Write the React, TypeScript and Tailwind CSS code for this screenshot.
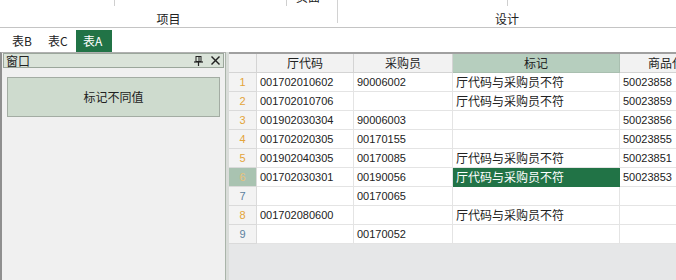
import React from 'react';

type Row = { n: string; a: string; b: string; c: string; d: string; sel?: boolean; blue?: boolean };

const rows: Row[] = [
  { n: '1', a: '001702010602', b: '90006002', c: '厅代码与采购员不符', d: '50023858' },
  { n: '2', a: '001702010706', b: '', c: '厅代码与采购员不符', d: '50023859' },
  { n: '3', a: '001902030304', b: '90006003', c: '', d: '50023856' },
  { n: '4', a: '001702020305', b: '00170155', c: '', d: '50023855' },
  { n: '5', a: '001902040305', b: '00170085', c: '厅代码与采购员不符', d: '50023851' },
  { n: '6', a: '001702030301', b: '00190056', c: '厅代码与采购员不符', d: '50023853', sel: true },
  { n: '7', a: '', b: '00170065', c: '', d: '', blue: true },
  { n: '8', a: '001702080600', b: '', c: '厅代码与采购员不符', d: '' },
  { n: '9', a: '', b: '00170052', c: '', d: '', blue: true },
];

const cjk = "text-[12px] [font-family:'Noto_Sans_CJK_SC',sans-serif]";
const num = "text-[11px] [font-family:'Liberation_Sans',Arial,sans-serif]";

function PinIcon() {
  return (
    <svg width="9" height="10" viewBox="0 0 9 10" className="block">
      <rect x="2" y="0.5" width="5" height="5" fill="none" stroke="#222" strokeWidth="1" />
      <line x1="5" y1="1" x2="5" y2="5" stroke="#222" strokeWidth="1" />
      <line x1="0" y1="6" x2="9" y2="6" stroke="#222" strokeWidth="1.2" />
      <line x1="4.5" y1="6" x2="4.5" y2="10" stroke="#222" strokeWidth="1.2" />
    </svg>
  );
}

function CloseIcon() {
  return (
    <svg width="9" height="9" viewBox="0 0 9 9" className="block">
      <line x1="0.5" y1="0.5" x2="8.5" y2="8.5" stroke="#222" strokeWidth="1.4" />
      <line x1="8.5" y1="0.5" x2="0.5" y2="8.5" stroke="#222" strokeWidth="1.4" />
    </svg>
  );
}

export default function App() {
  return (
    <div className="w-[676px] h-[280px] overflow-hidden bg-white text-[#222] flex flex-col [font-family:'Liberation_Sans','Noto_Sans_CJK_SC',sans-serif]">
      {/* Ribbon bottom */}
      <div className="h-[28px] shrink-0 border-b border-[#c4c4c4] flex">
        <div className="w-[337px] h-[27px] flex flex-col">
          <div className="h-[6px] flex overflow-hidden">
            <div className="w-[115px] border-r border-[#cfcfcf]" />
            <div className="w-[172px] border-r border-[#cfcfcf]" />
            <div className={`pl-[9px] leading-[12px] mt-[-9px] ${cjk}`}>页面</div>
          </div>
          <div className={`flex-1 flex items-end justify-center pb-[2px] leading-[12px] ${cjk}`}>项目</div>
        </div>
        <div className="w-px h-[23px] bg-[#d2d2d2]" />
        <div className="flex-1 h-[27px] flex flex-col">
          <div className="h-[6px] flex">
            <div className="w-[170px] border-r border-[#cfcfcf]" />
          </div>
          <div className={`flex-1 flex items-end justify-center pb-[2px] leading-[12px] ${cjk}`}>设计</div>
        </div>
      </div>

      {/* Tabs */}
      <div className="h-[24px] shrink-0 flex items-end pl-[5px]">
        <div className={`w-[36px] h-[22px] pl-[7px] flex items-center ${cjk}`}>表B</div>
        <div className={`w-[35px] h-[22px] pl-[7px] flex items-center ${cjk}`}>表C</div>
        <div className={`w-[36px] h-[22px] pl-[7px] flex items-center bg-[#217346] text-white ${cjk}`}>表A</div>
      </div>

      {/* Main */}
      <div className="flex-1 flex min-h-0">
        {/* Left dock panel */}
        <div className="w-[226px] shrink-0 bg-[#f0f0f0] border-l-2 border-[#8f8f8f] border-r border-r-[#a9b4a9] border-t border-t-[#b0b0b0] flex flex-col">
          <div className="mx-[1px] h-[15px] bg-[#dae3d9] border border-[#9ba69b] flex items-center pl-[2px] pr-[3px]">
            <span className={`leading-[12px] ${cjk} flex-1`}>窗口</span>
            <span className="mr-[8px]"><PinIcon /></span>
            <CloseIcon />
          </div>
          <div className="mx-[5px] mt-[9px] h-[40px] bg-[#cedbce] border border-[#a3aca3] flex items-center justify-center">
            <span className={`${cjk} text-[#222]`}>标记不同值</span>
          </div>
        </div>
        {/* splitter */}
        <div className="w-[3px] shrink-0 bg-[#d9dcd9]" />
        {/* Grid */}
        <div className="flex-1 min-w-0 bg-[#e6e7e8] border-t-2 border-[#a0a0a0] overflow-hidden">
          <div className="w-[520px] grid grid-cols-[28px_97px_99px_167px_129px] bg-white">
            <div className="h-[19px] bg-[#f2f2f2] border-r border-b border-[#d4d4d4]" />
            <div className={`h-[19px] bg-[#f2f2f2] border-r border-b border-[#d4d4d4] flex items-center justify-center ${cjk}`}>厅代码</div>
            <div className={`h-[19px] bg-[#f2f2f2] border-r border-b border-[#d4d4d4] flex items-center justify-center ${cjk}`}>采购员</div>
            <div className={`h-[19px] bg-[#b6cebe] border-r border-b border-[#a9bfb0] flex items-center justify-center ${cjk}`}>标记</div>
            <div className={`h-[19px] bg-[#f2f2f2] border-r border-b border-[#d4d4d4] flex items-center pl-[28px] ${cjk}`}>商品代码</div>
            {rows.map((r) => (
              <React.Fragment key={r.n}>
                <div
                  className={`h-[19px] border-r border-b border-[#dadada] flex items-center justify-center ${num} ${
                    r.sel ? 'bg-[#a9c3b1] text-[#e9c27a]' : 'bg-[#f3f3f3]'
                  } ${r.blue ? 'text-[#5b7f9e]' : r.sel ? '' : 'text-[#e3a43a]'}`}
                >
                  {r.n}
                </div>
                <div className={`h-[19px] border-r border-b border-[#e4e4e4] flex items-center pl-[3px] ${num}`}>{r.a}</div>
                <div className={`h-[19px] border-r border-b border-[#e4e4e4] flex items-center pl-[3px] ${num}`}>{r.b}</div>
                <div
                  className={`h-[19px] border-r border-b flex items-center pl-[3px] ${cjk} ${
                    r.sel ? 'bg-[#217346] text-white border-[#217346]' : 'border-[#e4e4e4]'
                  }`}
                >
                  {r.c}
                </div>
                <div className={`h-[19px] border-r border-b border-[#e4e4e4] flex items-center pl-[3px] ${num}`}>{r.d}</div>
              </React.Fragment>
            ))}
          </div>
        </div>
      </div>
    </div>
  );
}
